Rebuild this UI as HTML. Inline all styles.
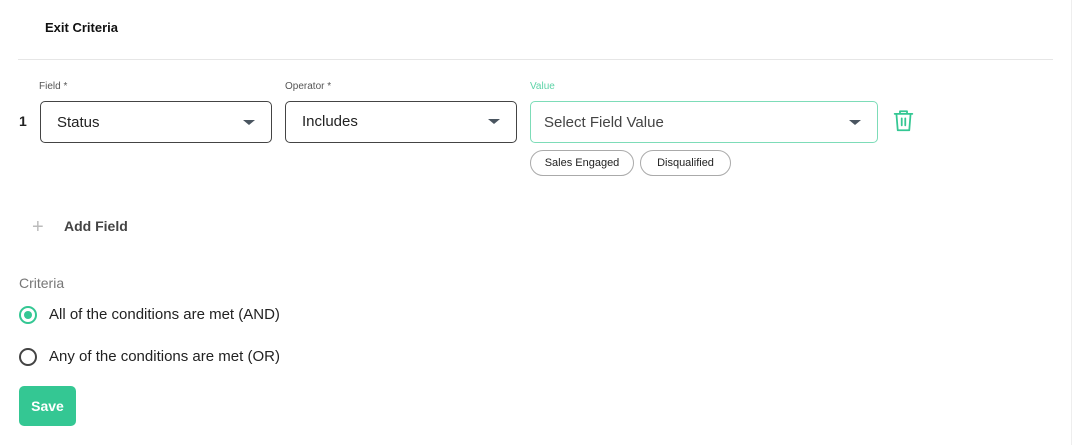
<!DOCTYPE html>
<html><head><style>
body{margin:0;width:1075px;height:445px;background:#fff;font-family:"Liberation Sans",sans-serif;position:relative;overflow:hidden;color:#222}
.a{position:absolute}
.box{position:absolute;border:1px solid #444;border-radius:5px;box-sizing:border-box;height:42px;top:101px}
.box span{position:absolute;left:16px;top:12px;font-size:15px;color:#222}
.car{position:absolute;right:16px;top:18px;width:0;height:0;border-left:6px solid transparent;border-right:6px solid transparent;border-top:5px solid #4a5560}
.lbl{position:absolute;top:81px;font-size:10px;color:#555}
.chip{position:absolute;top:150px;height:26px;border:1px solid #aaa;border-radius:13px;box-sizing:border-box;font-size:11px;line-height:24px;text-align:center;color:#222}
.radio{position:absolute;left:19px;width:18px;height:18px;border:2px solid #444;border-radius:50%;box-sizing:border-box}
</style></head><body>
<div class="a" style="left:45px;top:20px;font-size:13px;font-weight:bold;color:#111">Exit Criteria</div>
<div class="a" style="left:18px;top:59px;width:1035px;height:1px;background:#e6e6e6"></div>
<div class="a" style="left:1071px;top:0;width:1px;height:445px;background:#eee"></div>
<div class="lbl" style="left:39px">Field *</div>
<div class="lbl" style="left:285px">Operator *</div>
<div class="lbl" style="left:530px;color:#5dd3a7">Value</div>
<div class="a" style="left:19px;top:113px;font-size:14px;font-weight:bold">1</div>
<div class="box" style="left:40px;width:232px"><span>Status</span><div class="car"></div></div>
<div class="box" style="left:285px;width:232px"><span style="top:11px">Includes</span><div class="car" style="top:17px"></div></div>
<div class="box" style="left:530px;width:348px;border-color:#7ddcb8"><span style="left:13px;color:#444">Select Field Value</span><div class="car"></div></div>
<svg class="a" style="left:892px;top:108px" width="23" height="26" viewBox="0 0 26 28" fill="none" stroke="#34c793" stroke-width="2" stroke-linecap="round" stroke-linejoin="round"><path d="M3 6h20M9 6V3h8v3M5 6l1.5 18.5h13L21 6M11 11v8M15 11v8"/></svg>
<div class="chip" style="left:530px;width:104px">Sales Engaged</div>
<div class="chip" style="left:640px;width:91px">Disqualified</div>
<div class="a" style="left:32px;top:219px;font-size:20px;color:#bbb;font-weight:300;line-height:16px">+</div>
<div class="a" style="left:64px;top:218px;font-size:14px;font-weight:bold;color:#444">Add Field</div>
<div class="a" style="left:19px;top:275px;font-size:14px;color:#777">Criteria</div>
<div class="radio" style="top:306px;border-color:#34c793"><div style="position:absolute;left:3px;top:3px;width:8px;height:8px;border-radius:50%;background:#34c793"></div></div>
<div class="a" style="left:49px;top:306px;font-size:15px">All of the conditions are met (AND)</div>
<div class="radio" style="top:348px"></div>
<div class="a" style="left:49px;top:348px;font-size:15px">Any of the conditions are met (OR)</div>
<div class="a" style="left:19px;top:386px;width:57px;height:40px;background:#34c793;border-radius:5px;color:#fff;font-size:14px;font-weight:bold;text-align:center;line-height:40px">Save</div>
</body></html>
